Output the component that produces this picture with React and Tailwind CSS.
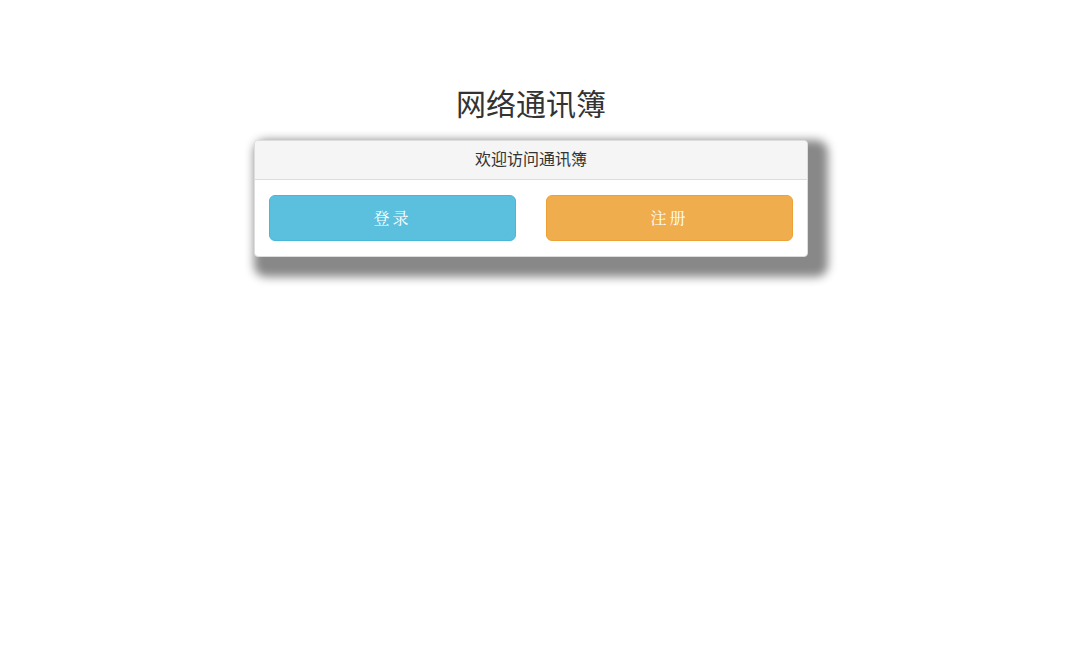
export default function App() {
    return (
        <div className="min-h-[659px] bg-white" style={{ fontFamily: '"Helvetica Neue", "Liberation Sans", "Noto Sans CJK SC", sans-serif' }}>
            <div className="ml-[254px] w-[554px] pt-[88px]">
                <h2 className="text-center text-[30px] leading-[33px] text-[#333] font-normal">网络通讯簿</h2>
                <div className="mt-[19px] rounded bg-white border border-[#ddd] shadow-[10px_10px_10px_10px_#888]">
                    <div className="h-[39px] flex items-center justify-center bg-[#f5f5f5] border-b border-[#ddd] rounded-t text-[16px] text-[#333]">
                        欢迎访问通讯簿
                    </div>
                    <div className="px-[14px] py-[15px] grid grid-cols-2 gap-[30px]">
                        <button className="h-[46px] rounded-md bg-[#5bc0de] border border-[#46b8da] text-white text-[16px] tracking-[3px]"
                            style={{ fontFamily: '"Noto Serif CJK SC", "AR PL UKai CN", "Noto Sans CJK SC", serif' }}>
                            登录
                        </button>
                        <button className="h-[46px] rounded-md bg-[#f0ad4e] border border-[#eea236] text-white text-[16px] tracking-[3px]"
                            style={{ fontFamily: '"Noto Serif CJK SC", "AR PL UKai CN", "Noto Sans CJK SC", serif' }}>
                            注册
                        </button>
                    </div>
                </div>
            </div>
        </div>
    );
}
